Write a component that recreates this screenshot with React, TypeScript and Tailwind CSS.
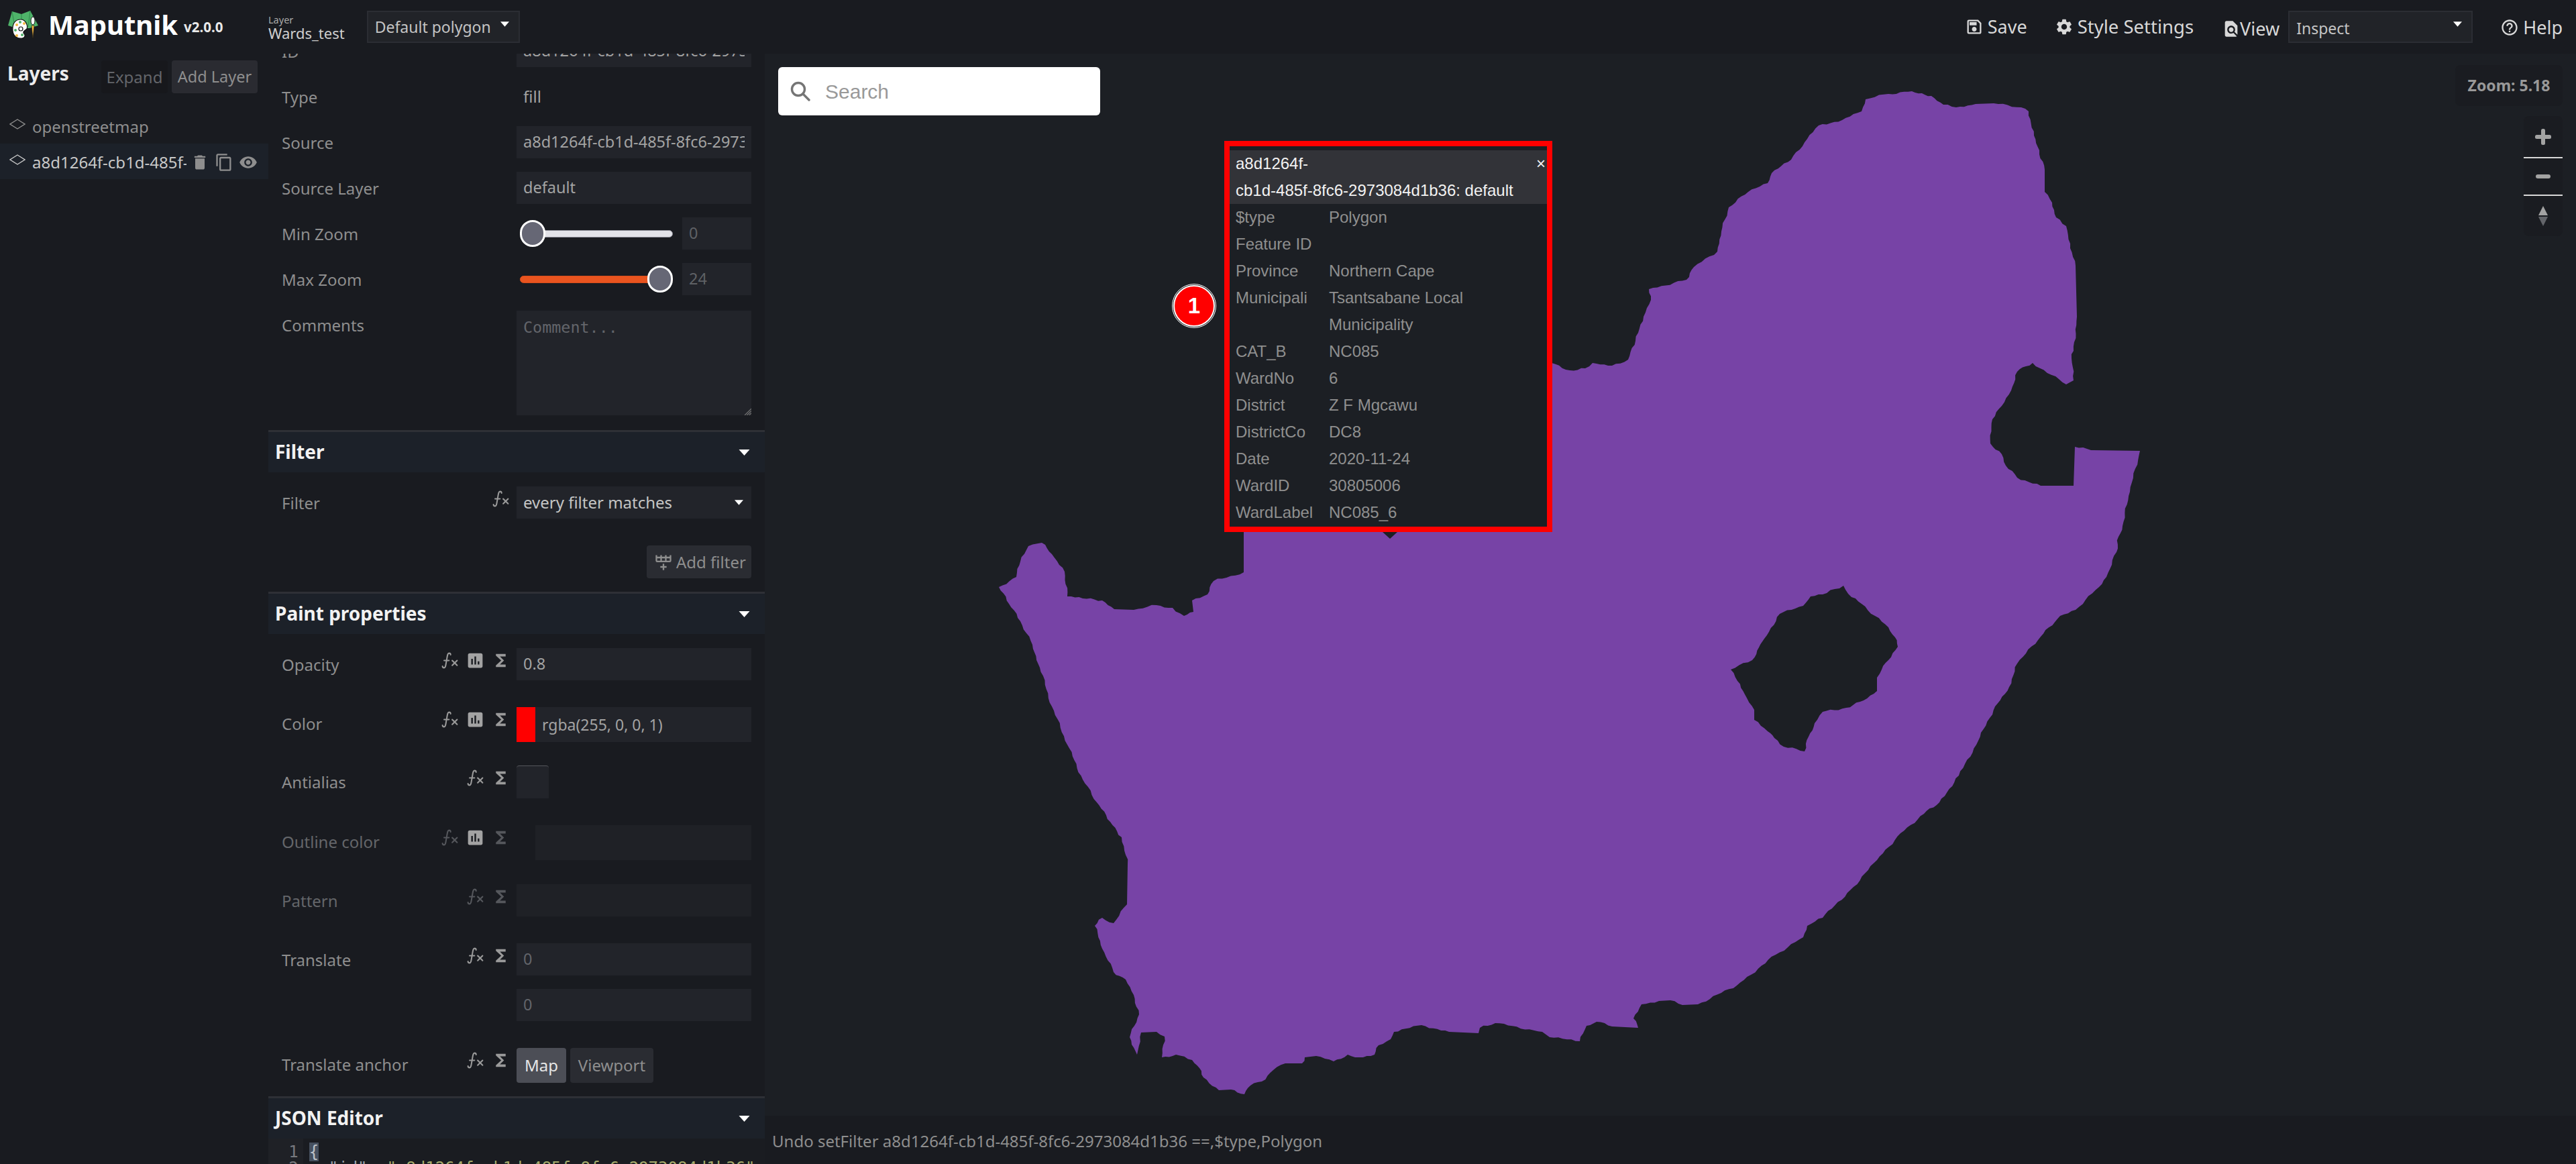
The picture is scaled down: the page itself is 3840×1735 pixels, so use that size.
import type { ReactNode } from "react";
import {
  MdContentCopy,
  MdDelete,
  MdFindInPage,
  MdFunctions,
  MdHelpOutline,
  MdInsertChart,
  MdOutlineSave,
  MdSettings,
  MdVisibility,
} from "react-icons/md";
import { TbMathFunction } from "react-icons/tb";

const COUNTRY =
  "2781,148 2815,140 2850,136 2865,139 2879,143 2897,156 2916,160 2945,155 2972,154 3013,160 3024,166 3032,202 3040,230 3048,253 3048,286 3059,302 3065,324 3080,337 3086,370 3094,396 3096,472 3091,523 3088,534 3091,567 3080,573 3030,541 3020,546 3007,554 2998,582 2984,605 2970,625 2967,661 2984,677 2990,694 3007,712 3042,724 3091,724 3093,666 3117,671 3190,672 3175,733 3164,784 3158,800 3155,823 3140,860 3129,875 3094,909 3071,918 3042,949 3007,989 2995,1024 2974,1053 2949,1104 2920,1156 2891,1196 2868,1213 2833,1242 2798,1282 2763,1322 2717,1368 2694,1380 2688,1397 2647,1423 2589,1469 2531,1497 2508,1498 2490,1491 2473,1492 2447,1497 2435,1518 2442,1532 2403,1530 2380,1523 2365,1529 2355,1552 2310,1546 2299,1538 2229,1525 2206,1532 2204,1540 2160,1538 2119,1528 2078,1538 2073,1549 2055,1558 2049,1572 2026,1576 2009,1572 1988,1582 1962,1574 1945,1576 1941,1585 1916,1585 1898,1595 1881,1612 1864,1618 1855,1631 1835,1624 1817,1625 1794,1606 1788,1592 1777,1580 1753,1572 1732,1576 1736,1545 1724,1538 1701,1539 1695,1572 1684,1546 1698,1512 1690,1483 1678,1460 1660,1449 1643,1414 1632,1380 1643,1368 1660,1376 1680,1348 1681,1288 1672,1248 1655,1225 1635,1196 1614,1162 1591,1110 1568,1053 1550,995 1539,961 1521,926 1504,900 1489,875 1515,860 1521,837 1533,814 1553,809 1568,826 1587,852 1591,889 1614,892 1643,895 1661,908 1690,909 1724,902 1748,906 1765,918 1779,912 1777,895 1800,886 1809,866 1854,853 1854,600 2313,541 2340,552 2363,549 2374,541 2403,545 2427,536 2438,508 2450,472 2461,447 2458,431 2514,417 2525,398 2560,375 2566,345 2577,309 2606,286 2635,273 2641,258 2670,238 2694,207 2711,187 2746,179 2775,166";

const LESOTHO =
  "2748,873 2760,890 2775,900 2795,918 2815,935 2825,950 2829,964 2815,984 2805,998 2798,1010 2798,1030 2778,1044 2752,1055 2717,1061 2705,1078 2696,1098 2690,1120 2659,1113 2645,1100 2635,1090 2615,1073 2615,1058 2601,1035 2590,1015 2580,998 2612,984 2622,965 2630,952 2653,915 2688,903 2699,889 2717,886 2735,878";

// breaks up long straight edges so the coast reads as a coast, axis-aligned edges stay straight
function rough(points: string, step = 7, amp = 0.9) {
  const pts = points.split(" ").map((p) => p.split(",").map(Number));
  const out: string[] = [];
  pts.forEach(([x, y], i) => {
    const [nx, ny] = pts[(i + 1) % pts.length];
    const dx = nx - x;
    const dy = ny - y;
    const len = Math.hypot(dx, dy);
    out.push(`${x},${y}`);
    if (Math.abs(dx) < 3 || Math.abs(dy) < 3) return;
    const n = Math.ceil(len / step);
    for (let k = 1; k < n; k++) {
      const t = k / n;
      const wobble = Math.sin(x * 0.37 + k * 1.9) + Math.sin(y * 0.23 + k * 0.7);
      out.push(`${(x + dx * t + (-dy / len) * wobble * amp).toFixed(1)},${(y + dy * t + (dx / len) * wobble * amp).toFixed(1)}`);
    }
  });
  return out.join(" ");
}

const popupRows = [
  ["$type", "Polygon"],
  ["Feature ID", ""],
  ["Province", "Northern Cape"],
  ["Municipali", "Tsantsabane Local"],
  ["", "Municipality"],
  ["CAT_B", "NC085"],
  ["WardNo", "6"],
  ["District", "Z F Mgcawu"],
  ["DistrictCo", "DC8"],
  ["Date", "2020-11-24"],
  ["WardID", "30805006"],
  ["WardLabel", "NC085_6"],
];

function Logo() {
  return (
    <svg width="48" height="46" viewBox="11 12 48 46" className="shrink-0">
      <path d="M12 36 L18 15 L32 19 L45 14 L57 36 L44 40 L24 40 Z" fill="#4fb36a" />
      <path d="M18 15 L22 38 M32 19 L32 38 M45 14 L42 38" stroke="#2f8a4a" strokeWidth="1" />
      <path
        d="M31 27 C22 27 18 34 19 44 C20 53 27 56 33 55 C38 54 38 50 35 47 C34 44 38 43 40 41 C42 36 38 27 31 27 Z"
        fill="#fff"
        stroke="#111"
        strokeWidth="1.2"
      />
      <circle cx="25" cy="35" r="2" fill="#f5b942" />
      <circle cx="30" cy="31" r="2" fill="#4fb36a" />
      <circle cx="36" cy="33" r="2" fill="#f5b942" />
      <circle cx="23" cy="43" r="2" fill="#4fb36a" />
      <circle cx="31" cy="41" r="3" fill="#fff" stroke="#111" strokeWidth="1.2" />
      <circle cx="33" cy="50" r="2" fill="#4fb36a" />
      <circle cx="25" cy="51" r="2" fill="#f5b942" />
      <path d="M47 36 L51 36 L49 56 Z" fill="#f5b942" stroke="#111" strokeWidth="0.6" />
      <ellipse cx="49" cy="29" rx="3" ry="6" fill="#fff" stroke="#111" strokeWidth="1" />
    </svg>
  );
}

function Caret({ className }: { className: string }) {
  return (
    <svg viewBox="0 0 16 9" className={className}>
      <path d="M0 0 H16 L8 9 Z" fill="currentColor" />
    </svg>
  );
}

function Diamond({ className }: { className: string }) {
  return (
    <svg viewBox="0 0 24 16" className={className} fill="none" stroke="currentColor" strokeWidth="1.4">
      <path d="M12 1 L23 8 L12 15 L1 8 Z" />
    </svg>
  );
}

function TopSelect({ label, className, textClass }: { label: string; className: string; textClass: string }) {
  return (
    <div className={`flex h-12 items-center border-2 border-[#2b2d33] bg-[#212328] text-[#c4c4c4] ${className}`}>
      <span className={`flex-1 pl-[10px] whitespace-nowrap ${textClass}`}>{label}</span>
      <Caret className="mr-3.5 mb-2 h-[8px] w-[13px] shrink-0 text-white" />
    </div>
  );
}

function ActionIcons({ icons, dim = false }: { icons: string; dim?: boolean }) {
  // f = function, c = chart, s = sigma
  const base = dim ? "text-[#55575c]" : "text-[#9a9a9a]";
  return (
    <div className={`mr-[5px] mt-[4px] flex self-start ${base}`}>
      {icons.split("").map((k, i) => (
        <div key={i} className="flex h-[28px] w-[38px] items-center justify-center">
          {k === "f" && <TbMathFunction size={29} strokeWidth={1.7} />}
          {k === "c" && <MdInsertChart size={29} className="text-[#a3a3a3]" />}
          {k === "s" && <MdFunctions size={29} />}
        </div>
      ))}
    </div>
  );
}

function Row({
  label,
  icons = "",
  className,
  labelClass = "text-[#8e8e8e]",
  dim = false,
  children,
}: {
  label: string;
  icons?: string;
  className: string;
  labelClass?: string;
  dim?: boolean;
  children: ReactNode;
}) {
  return (
    <div className={`flex pr-5 ${className}`}>
      <div className={`flex h-[50px] flex-1 items-center pl-5 text-[24px] ${labelClass}`}>{label}</div>
      {icons && <ActionIcons icons={icons} dim={dim} />}
      <div className="w-[350px] shrink-0">{children}</div>
    </div>
  );
}

function Field({ children, className = "text-[#a3a3a3]" }: { children?: ReactNode; className?: string }) {
  return (
    <div className={`flex h-12 items-center bg-[#22242a] px-2.5 text-[23.5px] ${className}`}>
      <span className="min-w-0 flex-1 overflow-hidden whitespace-nowrap">{children}</span>
    </div>
  );
}

function Slider({ value, pos }: { value: string; pos: "min" | "max" }) {
  return (
    <div className="flex items-center">
      <div className="relative ml-[5px] flex h-12 w-[228px] items-center">
        <div
          className={`h-[11px] w-full rounded-full border ${
            pos === "min" ? "border-[#8f8f99] bg-[#e2e2e8]" : "border-[#d94e1b] bg-[#e9541f]"
          }`}
        />
        <div
          className={`absolute top-1 h-10 w-[38px] rounded-full border-[3px] border-white bg-[#666775] ${
            pos === "min" ? "left-0" : "right-0"
          }`}
        />
      </div>
      <div className="ml-[14px] flex-1">
        <Field className="text-[#5f6165]">{value}</Field>
      </div>
    </div>
  );
}

function Section({ title, className }: { title: string; className: string }) {
  return (
    <div className={`flex h-[63px] items-center justify-between border-t-[3px] border-[#2e3036] bg-[#1c2129] px-2.5 ${className}`}>
      <span className="pb-[3px] text-[28px] font-bold text-[#f2f2f2]">{title}</span>
      <Caret className="mr-[12px] h-[9px] w-[17px] text-white" />
    </div>
  );
}

function Sidebar() {
  return (
    <aside className="w-[400px] shrink-0 bg-[#191b20]">
      <div className="flex h-[80px] items-start pt-[10px]">
        <span className="ml-[11px] w-[140px] text-[28px] leading-[38px] font-bold text-[#ececec]">Layers</span>
        <button className="h-[49px] w-[99px] rounded bg-[#17181c] text-[24px] text-[#63656a]">Expand</button>
        <button className="ml-[6px] h-[49px] w-[128px] rounded bg-[#2a2b31] text-[23.5px] text-[#8e8e8e]">Add Layer</button>
      </div>
      <div className="flex h-[54px] items-center pt-[3px] pl-[14px] text-[#8e8e8e]">
        <Diamond className="mb-2 h-[16px] w-[24px]" />
        <span className="ml-2.5 text-[24px]">openstreetmap</span>
      </div>
      <div className="flex h-[53px] items-center bg-[#1c2129] pt-[3px] pl-[14px] text-[#c8c8c8]">
        <Diamond className="mb-2 h-[16px] w-[24px]" />
        <span className="ml-2.5 w-[230px] overflow-hidden whitespace-nowrap text-[24px]">
          a8d1264f-cb1d-485f-8fc6-2973084d1b36
        </span>
        <div className="ml-[6px] flex text-[#8e8e8e]">
          <MdDelete size={28} />
          <MdContentCopy size={28} className="ml-[8px]" />
          <MdVisibility size={28} className="ml-[8px]" />
        </div>
      </div>
    </aside>
  );
}

function LayerEditor() {
  return (
    <div className="h-full w-[740px] shrink-0 overflow-hidden bg-[#191b20]">
      <div className="mt-[-28px]">
        <Row label="ID" className="">
          <Field>a8d1264f-cb1d-485f-8fc6-2973084d1b36</Field>
        </Row>
        <Row label="Type" className="mt-[18px]">
          <div className="flex h-12 items-center px-2.5 text-[24px] text-[#a3a3a3]">fill</div>
        </Row>
        <Row label="Source" className="mt-[18px]">
          <Field>a8d1264f-cb1d-485f-8fc6-2973084d1b36</Field>
        </Row>
        <Row label="Source Layer" className="mt-[18px]">
          <Field>default</Field>
        </Row>
        <Row label="Min Zoom" className="mt-[18px]">
          <Slider value="0" pos="min" />
        </Row>
        <Row label="Max Zoom" className="mt-[18px]">
          <Slider value="24" pos="max" />
        </Row>
        <div className="mt-[21px] flex pr-5">
          <div className="flex-1 pl-5 pt-[4px] text-[24px] text-[#8e8e8e]">Comments</div>
          <div className="relative h-[156px] w-[350px] bg-[#22242a] px-2.5 py-2 font-['DejaVu_Sans_Mono',monospace] text-[23.4px] text-[#63656a]">
            Comment...
            <svg viewBox="0 0 10 10" className="absolute right-0 bottom-0 h-[11px] w-[11px] text-[#777]">
              <path d="M10 1 L1 10 M10 4 L4 10 M10 7 L7 10" stroke="currentColor" strokeWidth="1" />
            </svg>
          </div>
        </div>

        <Section title="Filter" className="mt-[22px]" />
        <Row label="Filter" icons="f" className="mt-[21px]">
          <div className="flex h-12 items-center justify-between bg-[#22242a] pl-2.5 pr-3 text-[24px] text-[#c4c4c4]">
            every filter matches
            <Caret className="h-[8px] w-[13px] text-white" />
          </div>
        </Row>
        <div className="mt-[38px] flex justify-end pr-5">
          <button className="flex h-[49px] w-[156px] items-center rounded bg-[#2a2c32] pl-[11px] text-[24px] text-[#8e8e8e]">
            <svg viewBox="0 0 24 24" className="h-[28px] w-[28px] shrink-0" fill="currentColor">
              <path d="M22,10A2,2 0 0,1 20,12H4A2,2 0 0,1 2,10V3H4V5H8V3H10V5H14V3H16V5H20V3H22V10M4,10H8V7H4V10M10,10H14V7H10V10M20,10V7H16V10H20M11,14H13V17H16V19H13V22H11V19H8V17H11V14Z" />
            </svg>
            <span className="ml-[5px]">Add filter</span>
          </button>
        </div>

        <Section title="Paint properties" className="mt-5" />
        <Row label="Opacity" icons="fcs" className="mt-[21px]">
          <Field>0.8</Field>
        </Row>
        <Row label="Color" icons="fcs" className="mt-[38px]">
          <div className="flex h-[52px] items-center bg-[#22242a] text-[23px] text-[#a3a3a3]">
            <div className="h-full w-[28px] bg-[#ff0000]" />
            <span className="ml-2.5">rgba(255, 0, 0, 1)</span>
          </div>
        </Row>
        <Row label="Antialias" icons="fs" className="mt-[35px]">
          <div className="h-[49px] w-[48px] rounded-t-sm border-t border-[#55575c] bg-[#22242a]" />
        </Row>
        <Row label="Outline color" icons="fcs" dim labelClass="text-[#64666a]" className="mt-[39px]">
          <div className="ml-[28px] h-[52px] bg-[#1f2126]" />
        </Row>
        <Row label="Pattern" icons="fs" dim labelClass="text-[#64666a]" className="mt-9">
          <div className="h-12 bg-[#1f2126]" />
        </Row>
        <Row label="Translate" icons="fs" className="mt-[38px]">
          <Field className="text-[#63656a]">0</Field>
          <div className="mt-5">
            <Field className="text-[#63656a]">0</Field>
          </div>
        </Row>
        <Row label="Translate anchor" icons="fs" className="mt-10">
          <div className="flex gap-[6px]">
            <button className="h-[52px] w-[74px] rounded bg-[#4c4e56] text-[24px] text-[#e6e6e6]">Map</button>
            <button className="h-[52px] w-[124px] rounded bg-[#2a2c32] text-[24px] text-[#8e8e8e]">Viewport</button>
          </div>
        </Row>

        <Section title="JSON Editor" className="mt-5" />
        <div className="flex font-['DejaVu_Sans_Mono',monospace] text-[24px] leading-[24px]">
          <div className="w-[89px] bg-[#1f2126] pt-[8px] pr-[7px] text-right text-[#77797e]">
            <div>1</div>
            <div>2</div>
          </div>
          <div className="whitespace-nowrap bg-[#1a1c21] pt-[8px] pl-[9px] text-[#bfc3c9]">
            <div>
              <span className="bg-[#46505f]">{"{"}</span>
            </div>
            <div>
              <span className="ml-[29px] text-[#9ca3ad]">"id":</span>{" "}
              <span className="text-[#a6ab6c]">"a8d1264f-cb1d-485f-8fc6-2973084d1b36",</span>
            </div>
          </div>
        </div>
      </div>
    </div>
  );
}

function MapView() {
  return (
    <div className="relative flex-1 overflow-hidden bg-[#1c1f24]">
      <svg viewBox="1140 80 2700 1583" className="absolute inset-0 h-full w-full">
        <path d={`M${rough(COUNTRY)}Z M${rough(LESOTHO)}Z`} fill="#7743a6" fillRule="evenodd" />
      </svg>

      <div className="absolute top-5 left-5 flex h-[72px] w-[480px] items-center rounded-md bg-white font-['Liberation_Sans',sans-serif] text-[30px] text-[#999]">
        <svg viewBox="0 0 30 30" className="ml-[18px] h-[30px] w-[30px] shrink-0" fill="none" stroke="#757575" strokeWidth="3.4" strokeLinecap="round">
          <circle cx="12" cy="12" r="9.5" />
          <path d="M19 19 L28 28" />
        </svg>
        <span className="ml-[22px]">Search</span>
      </div>

      <div className="absolute top-[17px] right-5 flex h-[61px] w-[160px] items-center justify-center rounded-lg bg-[#1a1c21] text-[23px] font-bold text-[#999]">
        Zoom: 5.18
      </div>

      <div className="absolute top-[93px] right-5 w-[58px] rounded-lg bg-[#1a1c21] text-[#a3a3a3]">
        <div className="flex h-[61px] items-center justify-center">
          <svg viewBox="0 0 24 24" className="h-[24px] w-[24px]" fill="currentColor">
            <rect x="9" y="0" width="6" height="24" rx="2.5" />
            <rect x="0" y="9" width="24" height="6" rx="2.5" />
          </svg>
        </div>
        <div className="flex h-[58px] items-center justify-center border-y-2 border-[#d8d8d8]">
          <div className="h-[6px] w-[22px] rounded-[3px] bg-[#a3a3a3]" />
        </div>
        <div className="flex h-[60px] flex-col items-center justify-center gap-[2px]">
          <svg viewBox="0 0 14 14" className="h-[14px] w-[14px]">
            <path d="M7 0 L14 14 H0 Z" fill="#a3a3a3" />
          </svg>
          <svg viewBox="0 0 14 14" className="h-[14px] w-[14px]">
            <path d="M7 14 L14 0 H0 Z" fill="#63656a" />
          </svg>
        </div>
      </div>

      <div className="absolute top-[345px] left-[609px] flex h-[62px] w-[62px] items-center justify-center rounded-full border-2 border-white bg-[#ff0000] font-['Liberation_Sans',sans-serif] text-[33px] font-bold text-white outline-1 outline-offset-1 outline-white">
        1
      </div>

      <div className="absolute top-[130px] left-[685px] h-[583px] w-[489px] border-8 border-[#ff0000] bg-[#1c1f24] pt-[6px] font-['Liberation_Sans',sans-serif] text-[24px] leading-[40px] text-[#8f8f8f]">
        <div className="relative h-[80px] bg-[#323338] pl-[9px] pr-[40px] text-[#f2f2f2]">
          a8d1264f-
          <br />
          cb1d-485f-8fc6-2973084d1b36: default
          <span className="absolute top-0 right-[2px] text-[24px]">×</span>
        </div>
        {popupRows.map((r, i) => (
          <div key={i} className="flex h-[40px] pl-[9px]">
            <span className="w-[139px] shrink-0">{r[0]}</span>
            <span>{r[1]}</span>
          </div>
        ))}
      </div>
      <div className="absolute top-[713px] left-[921px] h-0 w-0 border-x-[11px] border-t-[10px] border-x-transparent border-t-[#1c1f24]" />
    </div>
  );
}

export default function App() {
  return (
    <div className="flex h-[1735px] w-[3840px] flex-col overflow-hidden bg-[#191b20] font-['Noto_Sans',sans-serif]">
      <header className="flex h-[80px] shrink-0 items-center bg-[#191b20] text-[#d8d8d8]">
        <div className="flex w-[400px] shrink-0 items-center">
          <div className="ml-[11px] mb-[6px]">
            <Logo />
          </div>
          <span className="ml-[13px] mb-[6px] text-[40px] leading-none font-bold text-white">Maputnik</span>
          <span className="ml-[9px] text-[20.5px] font-bold text-[#e8e8e8]">v2.0.0</span>
        </div>
        <div className="mb-[2px] flex flex-col text-[#cfcfcf]">
          <span className="text-[14.5px] leading-[20px] text-[#aaa]">Layer</span>
          <span className="text-[22px] leading-[20px]">Wards_test</span>
        </div>
        <TopSelect label="Default polygon" className="ml-[33px] w-[228px]" textClass="text-[23px]" />

        <div className="ml-auto flex items-center pr-5 text-[27px] text-[#d8d8d8]">
          <MdOutlineSave size={28} />
          <span className="ml-[6px]">Save</span>
          <MdSettings size={28} className="ml-[41px]" />
          <span className="ml-[6px] text-[27.5px]">Style Settings</span>
          <MdFindInPage size={28} className="ml-[42px] mt-[6px]" />
          <span className="mt-[6px] ml-[-1px]">View</span>
          <TopSelect label="Inspect" className="ml-[13px] w-[275px]" textClass="mt-[4px] text-[23px]" />
          <MdHelpOutline size={28} className="ml-[41px] mt-[2px]" />
          <span className="ml-[6px] mt-[2px]">Help</span>
        </div>
      </header>

      <div className="flex min-h-0 flex-1">
        <Sidebar />
        <LayerEditor />
        <div className="flex min-w-0 flex-1 flex-col">
          <MapView />
          <div className="flex h-[72px] shrink-0 items-center bg-[#191b20] pl-[11px] pt-[3px] text-[24px] text-[#8e8e8e]">
            Undo setFilter a8d1264f-cb1d-485f-8fc6-2973084d1b36 ==,$type,Polygon
          </div>
        </div>
      </div>
    </div>
  );
}
